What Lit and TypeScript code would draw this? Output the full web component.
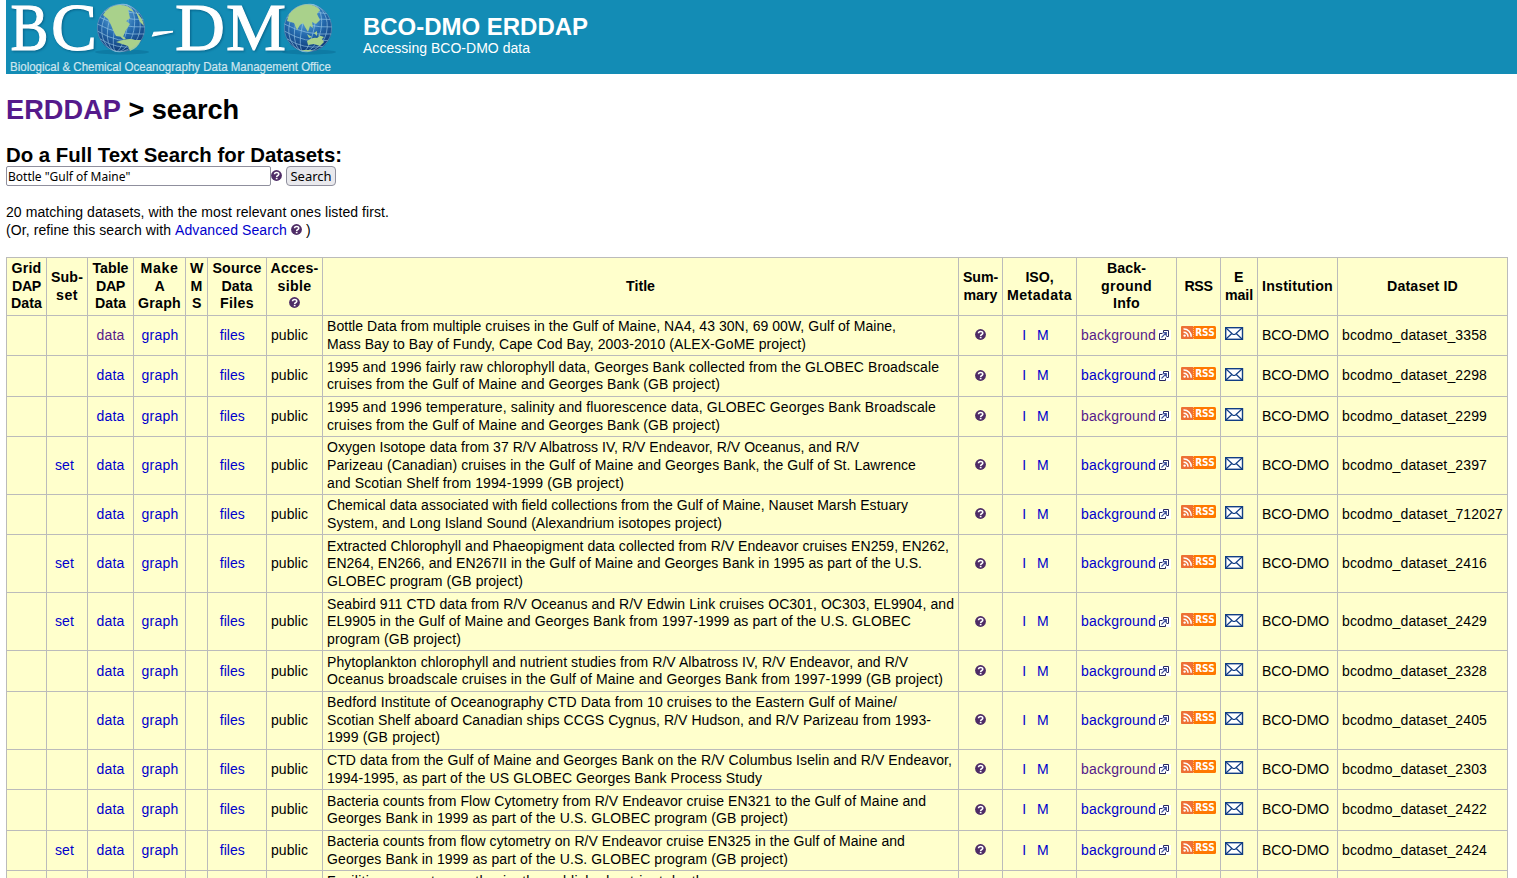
import { LitElement, html, css, svg } from "lit";
import { customElement } from "lit/decorators.js";
import { styleMap } from "lit/directives/style-map.js";
import { classMap } from "lit/directives/class-map.js";

const FAMILY = '"Liberation Sans", Arial, sans-serif';
const ctx = document.createElement("canvas").getContext("2d")!;

/** Text tracked so that it fills the given width. */
function fit(text: string, width: number, font = "14px") {
  ctx.font = `${font} ${FAMILY}`;
  const spacing = (width - ctx.measureText(text).width) / text.length;
  return html`<span class="fit" style=${styleMap({ letterSpacing: `${spacing.toFixed(3)}px` })}>${text}</span>`;
}

type Line = [string, number];
interface Dataset {
  set?: boolean;
  id: string;
  seenData?: boolean;
  seenInfo?: boolean;
  title: Line[];
}

const DATASETS: Dataset[] = [
  { id: "3358", seenData: true, seenInfo: true, title: [
    ["Bottle Data from multiple cruises in the Gulf of Maine, NA4, 43 30N, 69 00W, Gulf of Maine,", 569],
    ["Mass Bay to Bay of Fundy, Cape Cod Bay, 2003-2010 (ALEX-GoME project)", 479]] },
  { id: "2298", title: [
    ["1995 and 1996 fairly raw chlorophyll data, Georges Bank collected from the GLOBEC Broadscale", 612],
    ["cruises from the Gulf of Maine and Georges Bank (GB project)", 393]] },
  { id: "2299", seenInfo: true, title: [
    ["1995 and 1996 temperature, salinity and fluorescence data, GLOBEC Georges Bank Broadscale", 609],
    ["cruises from the Gulf of Maine and Georges Bank (GB project)", 393]] },
  { id: "2397", set: true, title: [
    ["Oxygen Isotope data from 37 R/V Albatross IV, R/V Endeavor, R/V Oceanus, and R/V", 533],
    ["Parizeau (Canadian) cruises in the Gulf of Maine and Georges Bank, the Gulf of St. Lawrence", 589],
    ["and Scotian Shelf from 1994-1999 (GB project)", 297]] },
  { id: "712027", title: [
    ["Chemical data associated with field collections from the Gulf of Maine, Nauset Marsh Estuary", 581],
    ["System, and Long Island Sound (Alexandrium isotopes project)", 395]] },
  { id: "2416", set: true, title: [
    ["Extracted Chlorophyll and Phaeopigment data collected from R/V Endeavor cruises EN259, EN262,", 622],
    ["EN264, EN266, and EN267II in the Gulf of Maine and Georges Bank in 1995 as part of the U.S.", 595],
    ["GLOBEC program (GB project)", 196]] },
  { id: "2429", set: true, title: [
    ["Seabird 911 CTD data from R/V Oceanus and R/V Edwin Link cruises OC301, OC303, EL9904, and", 627],
    ["EL9905 in the Gulf of Maine and Georges Bank from 1997-1999 as part of the U.S. GLOBEC", 584],
    ["program (GB project)", 134]] },
  { id: "2328", title: [
    ["Phytoplankton chlorophyll and nutrient studies from R/V Albatross IV, R/V Endeavor, and R/V", 582],
    ["Oceanus broadscale cruises in the Gulf of Maine and Georges Bank from 1997-1999 (GB project)", 616]] },
  { id: "2405", title: [
    ["Bedford Institute of Oceanography CTD Data from 10 cruises to the Eastern Gulf of Maine/", 570],
    ["Scotian Shelf aboard Canadian ships CCGS Cygnus, R/V Hudson, and R/V Parizeau from 1993-", 604],
    ["1999 (GB project)", 113]] },
  { id: "2303", seenInfo: true, title: [
    ["CTD data from the Gulf of Maine and Georges Bank on the R/V Columbus Iselin and R/V Endeavor,", 625],
    ["1994-1995, as part of the US GLOBEC Georges Bank Process Study", 435]] },
  { id: "2422", title: [
    ["Bacteria counts from Flow Cytometry from R/V Endeavor cruise EN321 to the Gulf of Maine and", 599],
    ["Georges Bank in 1999 as part of the U.S. GLOBEC program (GB project)", 461]] },
  { id: "2424", set: true, title: [
    ["Bacteria counts from flow cytometry on R/V Endeavor cruise EN325 in the Gulf of Maine and", 578],
    ["Georges Bank in 1999 as part of the U.S. GLOBEC program (GB project)", 461]] },
  { id: "700440", title: [
    ["Facilities seawater synthesis, the published nutrient depth", 377],
    ["profiles from the Gulf of Maine", 200]] },
];

const HEADS: Line[][] = [
  [["Grid", 30], ["DAP", 29], ["Data", 31]],
  [["Sub-", 32], ["set", 22]],
  [["Table", 36], ["DAP", 29], ["Data", 31]],
  [["Make", 38], ["A", 10], ["Graph", 43]],
  [["W", 13], ["M", 12], ["S", 9]],
  [["Source", 49], ["Data", 31], ["Files", 34]],
  [["Acces-", 48], ["sible", 34]],
  [["Title", 29]],
  [["Sum-", 35], ["mary", 34]],
  [["ISO,", 28], ["Metadata", 65]],
  [["Back-", 39], ["ground", 51], ["Info", 27]],
  [["RSS", 28]],
  [["E", 10], ["mail", 28]],
  [["Institution", 71]],
  [["Dataset ID", 71]],
];

const helpIcon = html`<svg class="help" width="12" height="12" viewBox="0 0 12 12">
  <circle cx="5.500" cy="5.500" r="5.400" fill="#4e2c66" />
  <path d="M3.500 4.300C3.500 2 7.800 2 7.800 4.200C7.800 5.500 5.700 5.500 5.600 7" fill="none" stroke="#fff" stroke-width="1.500" />
  <rect x="4.800" y="7.800" width="1.700" height="1.500" fill="#fff" />
</svg>`;

const outIcon = html`<svg class="out" width="13" height="10" viewBox="0 0 13 10">
  <rect width="13" height="10" fill="#fff" />
  <path d="M5.500 2.500V.5H10.500V6.500H8.500M4.500 3.500H1.500V9.500H7.500V7.500" fill="none" stroke="#26265f" />
  <path d="M3.500 7.500L7.800 3.200M4.800 2.700H8.300V6" fill="none" stroke="#3f4f9b" stroke-width="1.200" />
</svg>`;

const rssIcon = html`<svg class="rss" width="35" height="13" viewBox="0 0 35 13">
  <rect width="35" height="13" rx="1.500" fill="#ff7800" />
  <path d="M1.500 0H12V13H1.500Q0 13 0 11.500V1.500Q0 0 1.500 0Z" fill="#ed6f35" />
  <path d="M12.500 0V13" stroke="#ffb06b" stroke-dasharray="1 1" />
  <circle cx="3.600" cy="9.600" r="1.200" fill="#fff" />
  <path d="M2.500 6.200A4.200 4.200 0 0 1 7 10.800M2.500 3A7.400 7.400 0 0 1 10.200 10.800" fill="none" stroke="#fff" stroke-width="1.500" />
  <text x="14.200" y="10" textLength="19.500" lengthAdjust="spacingAndGlyphs" fill="#fff" font-family="DejaVu Sans, sans-serif" font-weight="700" font-size="10">RSS</text>
</svg>`;

const mailIcon = html`<svg class="mail" width="19" height="13" viewBox="0 0 19 13">
  <rect x=".7" y=".7" width="16.800" height="11.600" fill="#fff" stroke="#123e84" stroke-width="1.400" />
  <path d="M1 1L7.500 7Q9 8 10.500 7L17 1M1 12L6.800 6.500M17 12L11.200 6.500" fill="none" stroke="#123e84" stroke-width="1.200" />
</svg>`;

const americas = svg`<path d="M-18-13Q-13-22-3-23Q8-24 13-16L7-18L9-10L4-6L1 0L-3 1L-1 5L2 8L5 11L2 11L-6 4L-10-3L-13-9Z
  M-12-8L4-8L9-4L5 2L2 9L-5 8L-8 2Z M-5 14Q9 9 14 12L20 12Q17 20 9 23L7 18Z M15-16Q22-10 23-2L19-6Z" fill="#a9d18b" />`;
const asia = svg`<path d="M-19-14Q-12-23-1-24Q8-23 12-18L9-14L12-8L8-4L4-6L5 0L2-2L0 4L-3-1L-5-5L-8-3L-11 2L-14-5L-21-7Z
  M-1 6L4 9L1 10Z M6 5L9 3L9 8Z M10 7L16 9L14 11Z M-1 13Q4 9 9 10L12 8L16 14L12 18L6 16L0 17Z M-8 22L5 22L0 24Z" fill="#a9d18b" />`;

function globe(x: number, land: unknown) {
  return svg`<g transform="translate(${x} 28)">
    <ellipse cx="1" cy="24" rx="27" ry="2.500" fill="#075d83" opacity=".35" />
    <circle r="24" fill="url(#sea)" />
    <g fill="none" stroke="#a8d4ee" stroke-width=".7" opacity=".75" transform="rotate(12)">
      <ellipse rx="6" ry="24" /><ellipse rx="13" ry="24" /><ellipse rx="19" ry="24" />
      <path d="M-20-13Q0-8 20-13M-23-6Q0 0 23-6M-24 1Q0 8 24 1M-22 8Q0 16 22 8M-18 15Q0 22 18 15M-15-18Q0-15 15-18" />
    </g>
    ${land}
    <circle r="23.600" fill="none" stroke="#83b6cf" stroke-width=".7" opacity=".7" />
  </g>`;
}

const logo = html`<svg class="logo" width="330" height="74" viewBox="6 0 330 74">
  <defs>
    <radialGradient id="sea" cx=".45" cy=".25" r=".8">
      <stop offset="0" stop-color="#6eb5e2" /><stop offset=".5" stop-color="#2469ad" /><stop offset="1" stop-color="#0c326e" />
    </radialGradient>
  </defs>
  <g class="mark">
    <text x="10.500" y="50" textLength="38" lengthAdjust="spacingAndGlyphs">B</text>
    <text x="51" y="50" textLength="46" lengthAdjust="spacingAndGlyphs">C</text>
    <text x="175" y="50" textLength="50" lengthAdjust="spacingAndGlyphs">D</text>
    <text x="226" y="50" textLength="60" lengthAdjust="spacingAndGlyphs">M</text>
    <path d="M154 32.200L172.500 31.300V32L152.500 36Z" />
  </g>
  ${globe(121, americas)} ${globe(308, asia)}
  <text class="caption" x="10" y="71" textLength="321" lengthAdjust="spacingAndGlyphs">Biological &amp; Chemical Oceanography Data Management Office</text>
</svg>`;

@customElement("app-root")
export class AppRoot extends LitElement {
  static styles = css`
    :host { display: block; height: 878px; overflow: hidden; background: #fff; color: #000;
      font: 14px/17.6px "Liberation Sans", Arial, sans-serif; }
    .fit { white-space: pre; }
    .banner { display: flex; height: 74px; margin-left: 6px; background: #138cb5; color: #fff; }
    .logo { display: block; }
    .mark { fill: #fff; stroke: #fff; stroke-width: 1.1px; font: 67px "Liberation Serif", serif;
      filter: drop-shadow(1px 1px 1px #07638a); }
    .caption { fill: #cfe6ef; stroke: #cfe6ef; stroke-width: .2px; font: 12px "Liberation Sans", sans-serif; }
    .names { padding: 13px 0 0 27px; }
    .site { font-size: 24px; line-height: 27px; font-weight: 700; }
    .sub { line-height: 16px; }
    .main { padding: 0 9px 0 6px; }
    h1 { margin: 19px 0 0; font-size: 27.2px; line-height: 33px; }
    h2 { margin: 18px 0 0; font-size: 20.4px; line-height: 22px; }
    .link { color: #0000cc; }
    .seen { color: #551a8b; }
    .form { display: flex; height: 20px; font-family: "Noto Sans", "DejaVu Sans", sans-serif; font-size: 13px; }
    .query, .go { box-sizing: border-box; height: 20px; border: 1px solid #8f8f9d; border-radius: 2px; line-height: 18px; }
    .query { width: 265px; padding-left: 1px; font-size: 12px; line-height: 20px; }
    .go { width: 50px; margin-left: 3px; border-radius: 4px; background: #e9e9ed; text-align: center; }
    .form .help { margin-top: 4px; }
    .note { padding: 18px 0; height: 34.8px; }
    .note .help { vertical-align: -1px; margin: 0 -1px 0 4px; }
    .row { display: grid; grid-template-columns: 40px 41px 46px 52px 22px 59px 56px 636px 44px 74px 100px 44px 37px 80px 171px;
      height: 40.4px; background: #ffffcc; }
    .tall { height: 58px; }
    .cell { display: flex; align-items: center; justify-content: center; box-sizing: border-box;
      border: solid #bbb; border-width: 1px 0 0 1px; padding-top: .6px; white-space: nowrap; }
    .cell:last-child { border-right-width: 1px; }
    .left { justify-content: flex-start; padding-left: 4px; }
    .head { font-weight: 700; font-size: 14.2px; text-align: center; flex-direction: column; }
    .cell .help { display: block; margin-top: -1px; }
    .line { display: block; }
    .head .help { margin: 2px 0 3.6px; }
    .set { padding-right: 5px; }
    .graph { padding-left: 1px; }
    .iso { gap: 11px; padding-right: 8px; }
    .out { margin: -1px 0 0 2px; }
    .rss { margin-top: -6px; }
    .mail { margin-top: -4px; }
  `;

  private row(d: Dataset) {
    return html`<div class=${classMap({ row: true, tall: d.title.length > 2 })}>
      <div class="cell"></div>
      <div class="cell set"><span class="link">${d.set ? fit("set", 19) : ""}</span></div>
      <div class="cell"><span class=${classMap({ link: true, seen: !!d.seenData })}>${fit("data", 28)}</span></div>
      <div class="cell graph"><span class="link">${fit("graph", 37)}</span></div>
      <div class="cell"></div>
      <div class="cell left"><span class="link">&nbsp; ${fit("files", 25)}</span></div>
      <div class="cell left">${fit("public", 37)}</div>
      <div class="cell left"><div>${d.title.map(([t, w]) => html`<span class="line">${fit(t, w)}</span>`)}</div></div>
      <div class="cell">${helpIcon}</div>
      <div class="cell iso link"><span>I</span><span>M</span></div>
      <div class="cell left"><span class=${classMap({ link: true, seen: !!d.seenInfo })}>${fit("background", 75)}</span>${outIcon}</div>
      <div class="cell">${rssIcon}</div>
      <div class="cell left">${mailIcon}</div>
      <div class="cell left">${fit("BCO-DMO", 67)}</div>
      <div class="cell left">${fit(`bcodmo_dataset_${d.id}`, d.id.length > 4 ? 161 : 145)}</div>
    </div>`;
  }

  render() {
    return html`
      <div class="banner">${logo}
        <div class="names">
          <div class="site">${fit("BCO-DMO ERDDAP", 225, "bold 24px")}</div>
          <div class="sub">${fit("Accessing BCO-DMO data", 167)}</div>
        </div>
      </div>
      <div class="main">
        <h1><span class="seen">${fit("ERDDAP", 115, "bold 27.2px")}</span>${fit(" > search", 118, "bold 27.2px")}</h1>
        <h2>${fit("Do a Full Text Search for Datasets:", 336, "bold 20.4px")}</h2>
        <div class="form"><div class="query">Bottle "Gulf of Maine"</div>${helpIcon}<div class="go">Search</div></div>
        <div class="note">
          <div>${fit("20 matching datasets, with the most relevant ones listed first.", 383)}</div>
          <div>${fit("(Or, refine this search with ", 169)}<span class="link">${fit("Advanced Search", 112)}</span>${helpIcon} )</div>
        </div>
        <div class="row tall">
          ${HEADS.map((lines, i) => html`<div class="cell head">
            ${lines.map(([t, w]) => html`<span class="line">${fit(t, w, "bold 14.2px")}</span>`)}
            ${i === 6 ? helpIcon : ""}
          </div>`)}
        </div>
        ${DATASETS.map((d) => this.row(d))}
      </div>`;
  }
}
